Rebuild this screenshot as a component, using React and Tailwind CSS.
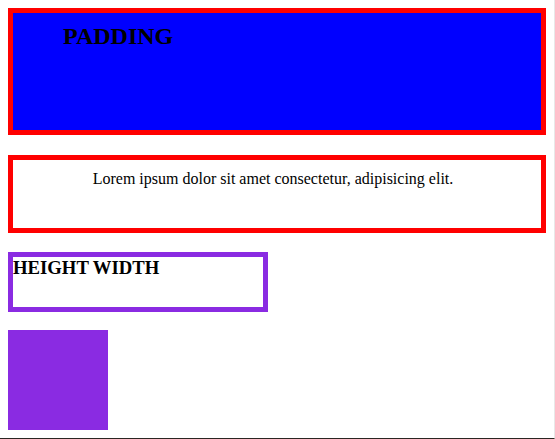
export default function App() {
  return (
    <div className="w-[555px] h-[439px] overflow-hidden bg-white border-r border-b border-r-[#e8e8e8] border-b-[#2b2622] font-['Liberation_Serif',serif] text-black">
      <div className="p-2">

        {/* Padding box */}
        <div className="h-[127px] border-[5px] border-[#ff0000] bg-[#0000ff] pt-[10px] pl-[50px]">
          <h2 className="text-[24px] font-bold leading-[normal]">PADDING</h2>
        </div>

        {/* Centered text box */}
        <div className="mt-5 h-[78px] border-[5px] border-[#ff0000] pt-[10px] pr-2 text-center">
          <p className="text-[16px] leading-[normal]">
            Lorem ipsum dolor sit amet consectetur, adipisicing elit.
          </p>
        </div>

        {/* Height / width box */}
        <div className="mt-[19px] w-[260px] h-[60px] border-[5px] border-[#8a2be2]">
          <h3 className="text-[18.72px] font-bold leading-[normal]">HEIGHT WIDTH</h3>
        </div>

        {/* Square */}
        <div className="mt-[18px] w-[100px] h-[100px] bg-[#8a2be2]"></div>

      </div>
    </div>
  );
}
